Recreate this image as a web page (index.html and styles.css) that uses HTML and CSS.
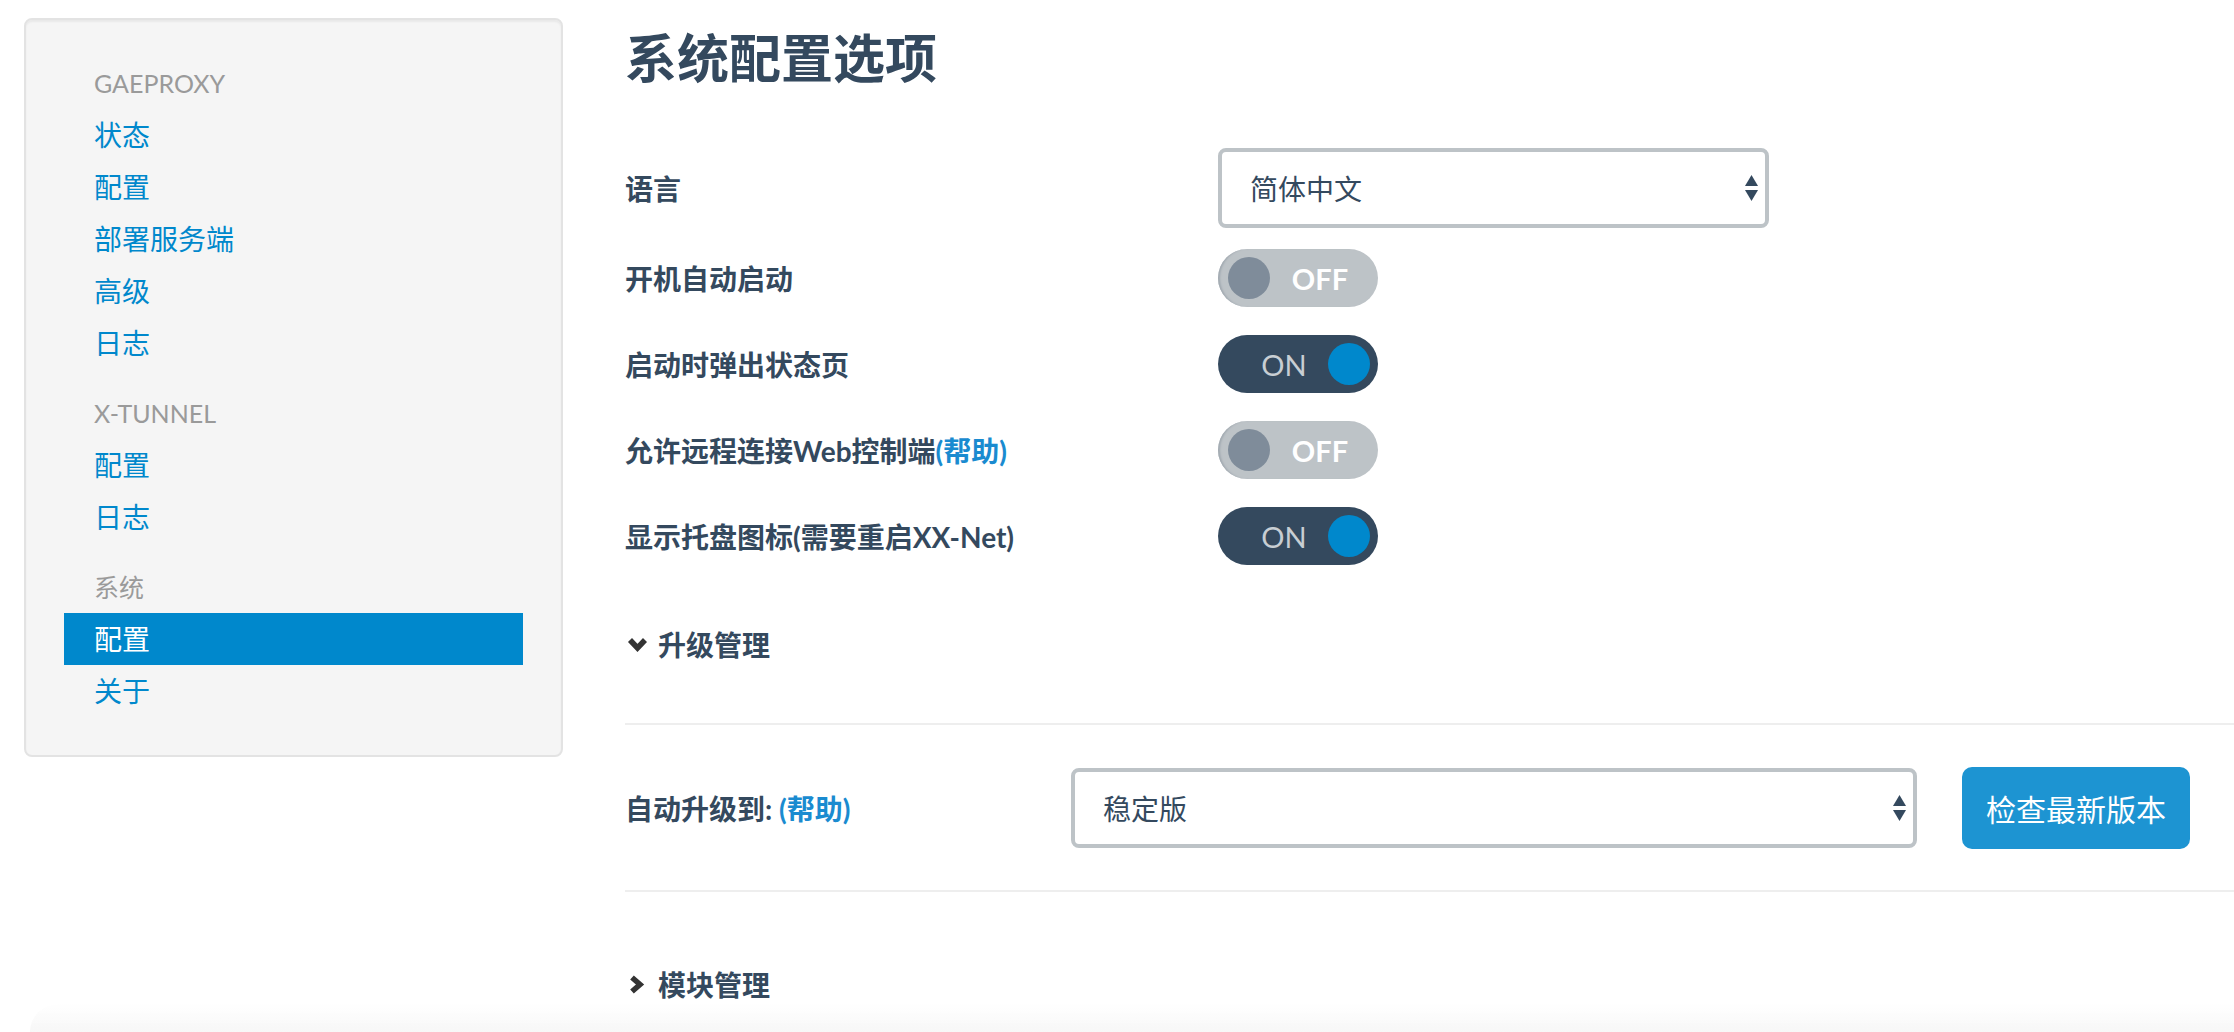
FILE: index.html
```html
<!DOCTYPE html>
<html>
<head>
    <meta charset="utf-8">
    <title>XX-Net 系统配置</title>
    <link rel="stylesheet" href="styles.css">
</head>
<body>

<div class="page">
    <div class="sidebar">
        <ul class="nav-list">
            <li class="nav-header">GAEPROXY</li>
            <li><a href="#">状态</a></li>
            <li><a href="#">配置</a></li>
            <li><a href="#">部署服务端</a></li>
            <li><a href="#">高级</a></li>
            <li><a href="#">日志</a></li>
            <li class="nav-header">X-TUNNEL</li>
            <li><a href="#">配置</a></li>
            <li><a href="#">日志</a></li>
            <li class="nav-header">系统</li>
            <li class="active"><a href="#">配置</a></li>
            <li><a href="#">关于</a></li>
        </ul>
    </div>

    <div class="main">
        <h2>系统配置选项</h2>

        <div class="form-row lang-row">
            <div class="label">语言</div>
            <div class="select lang-select">
                <span>简体中文</span>
                <svg width="13" height="26" viewBox="0 0 13 26"><polygon points="6.5,0 13,11 0,11" fill="#34495e"/><polygon points="0,15 13,15 6.5,26" fill="#34495e"/></svg>
            </div>
        </div>

        <div class="form-row">
            <div class="label">开机自动启动</div>
            <div class="switch off"><span class="knob"></span><span class="switch-text">OFF</span></div>
        </div>

        <div class="form-row">
            <div class="label">启动时弹出状态页</div>
            <div class="switch on"><span class="switch-text">ON</span><span class="knob"></span></div>
        </div>

        <div class="form-row">
            <div class="label">允许远程连接Web控制端<a href="#" class="help">(帮助)</a></div>
            <div class="switch off"><span class="knob"></span><span class="switch-text">OFF</span></div>
        </div>

        <div class="form-row">
            <div class="label">显示托盘图标(需要重启XX-Net)</div>
            <div class="switch on"><span class="switch-text">ON</span><span class="knob"></span></div>
        </div>

        <div class="section-title upgrade-title">
            <span class="chevron">
                <svg width="21" height="15" viewBox="0 0 21 15"><polyline points="3,3 10.5,11 18,3" fill="none" stroke="#333" stroke-width="5.5" stroke-linejoin="miter"/></svg>
            </span>
            升级管理
        </div>

        <hr>

        <div class="upgrade-row">
            <div class="label upgrade-label">自动升级到: <a href="#" class="help">(帮助)</a></div>
            <div class="select upgrade-select">
                <span>稳定版</span>
                <svg width="13" height="26" viewBox="0 0 13 26"><polygon points="6.5,0 13,11 0,11" fill="#34495e"/><polygon points="0,15 13,15 6.5,26" fill="#34495e"/></svg>
            </div>
            <button class="btn">检查最新版本</button>
        </div>

        <hr>

        <div class="section-title module-title">
            <span class="chevron">
                <svg width="16" height="19" viewBox="0 0 16 19"><polyline points="3,2.5 11,9.5 3,16.5" fill="none" stroke="#333" stroke-width="5.5" stroke-linejoin="miter"/></svg>
            </span>
            模块管理
        </div>
    </div>
</div>

<div class="bottom-fade"></div>

</body>
</html>
```

FILE: styles.css
```css
body {
    margin: 0;
    font-family: Lato, "Noto Sans CJK SC", sans-serif;
    font-size: 28px;
    color: #34495e;
    background: #fff;
}

a {
    color: #0088cc;
    text-decoration: none;
}

.page {
    display: flex;
    align-items: flex-start;
    padding: 18px 0 0 24px;
}

/* sidebar */

.sidebar {
    width: 539px;
    box-sizing: border-box;
    background: #f5f5f5;
    border: 2px solid #e3e3e3;
    border-radius: 8px;
    box-shadow: inset 0 2px 2px rgba(0,0,0,.05);
    padding: 37px 38px 38px;
}

.nav-list {
    list-style: none;
    margin: 0;
    padding: 0;
}

.nav-list li a {
    display: block;
    padding: 0 30px;
    line-height: 52px;
    height: 52px;
}

.nav-header {
    padding: 0 30px;
    line-height: 52px;
    height: 52px;
    font-size: 25px;
    color: #9a9a9a;
}

.nav-list li + .nav-header {
    margin-top: 18px;
}

.nav-list .active a {
    background: #0088cc;
    color: #fff;
}

/* main */

.main {
    flex: 1;
    margin-left: 62px;
}

h2 {
    margin: 4px 0 0 0;
    font-size: 52px;
    line-height: 72px;
    font-weight: 700;
    color: #34495e;
}

.form-row {
    display: flex;
    align-items: center;
    margin-bottom: 28px;
}

.lang-row {
    margin-top: 54px;
    margin-bottom: 21px;
}

.label {
    width: 593px;
    font-weight: 700;
    color: #34495e;
}

.help {
    font-weight: 700;
    color: #1a8bd0;
}

.select {
    box-sizing: border-box;
    height: 80px;
    border: 4px solid #bdc3c7;
    border-radius: 8px;
    background: #fff;
    display: flex;
    align-items: center;
    justify-content: space-between;
    padding: 0 7px 0 28px;
    color: #34495e;
}

.lang-select {
    width: 551px;
}

.switch {
    box-sizing: border-box;
    width: 160px;
    height: 58px;
    border-radius: 29px;
    display: flex;
    align-items: center;
    padding: 0 8px 0 10px;
    font-family: Lato, sans-serif;
    font-size: 29px;
}

.knob {
    width: 42px;
    height: 42px;
    border-radius: 50%;
    flex-shrink: 0;
}

.switch-text {
    flex: 1;
    text-align: center;
}

.switch.off {
    background: #bdc3c7;
    box-shadow: inset 3px 0 2px -1px #a2aab1;
}

.switch.off .knob {
    background: #7f8c9a;
}

.switch.off .switch-text {
    color: #fff;
    font-weight: 700;
}

.switch.on {
    background: #34495e;
}

.switch.on .knob {
    background: #0088cc;
}

.switch.on .switch-text {
    color: #c8ced3;
    padding-left: 12px;
}

.section-title {
    display: flex;
    align-items: center;
    height: 40px;
    font-weight: 700;
}

.chevron {
    width: 24px;
    margin-right: 9px;
    display: flex;
    justify-content: center;
}

.upgrade-title {
    margin-top: 59px;
}

hr {
    border: none;
    border-top: 2px solid #eeeeee;
    margin: 59px 0 0 0;
}

.upgrade-row {
    display: flex;
    align-items: center;
    margin-top: 42px;
}

.upgrade-label {
    width: 446px;
}

.upgrade-select {
    width: 846px;
    margin-right: 45px;
}

.btn {
    width: 228px;
    height: 82px;
    border: none;
    border-radius: 10px;
    background: #1d94d2;
    color: #fff;
    font-family: Lato, "Noto Sans CJK SC", sans-serif;
    font-size: 30px;
    padding: 0;
}

.upgrade-row + hr {
    margin-top: 41px;
}

.module-title {
    margin-top: 72px;
}

.bottom-fade {
    position: fixed;
    left: 30px;
    right: 0;
    bottom: 0;
    height: 28px;
    background: linear-gradient(to bottom, rgba(255,255,255,0), #f7f7f7);
    border-top-left-radius: 28px;
}
```
